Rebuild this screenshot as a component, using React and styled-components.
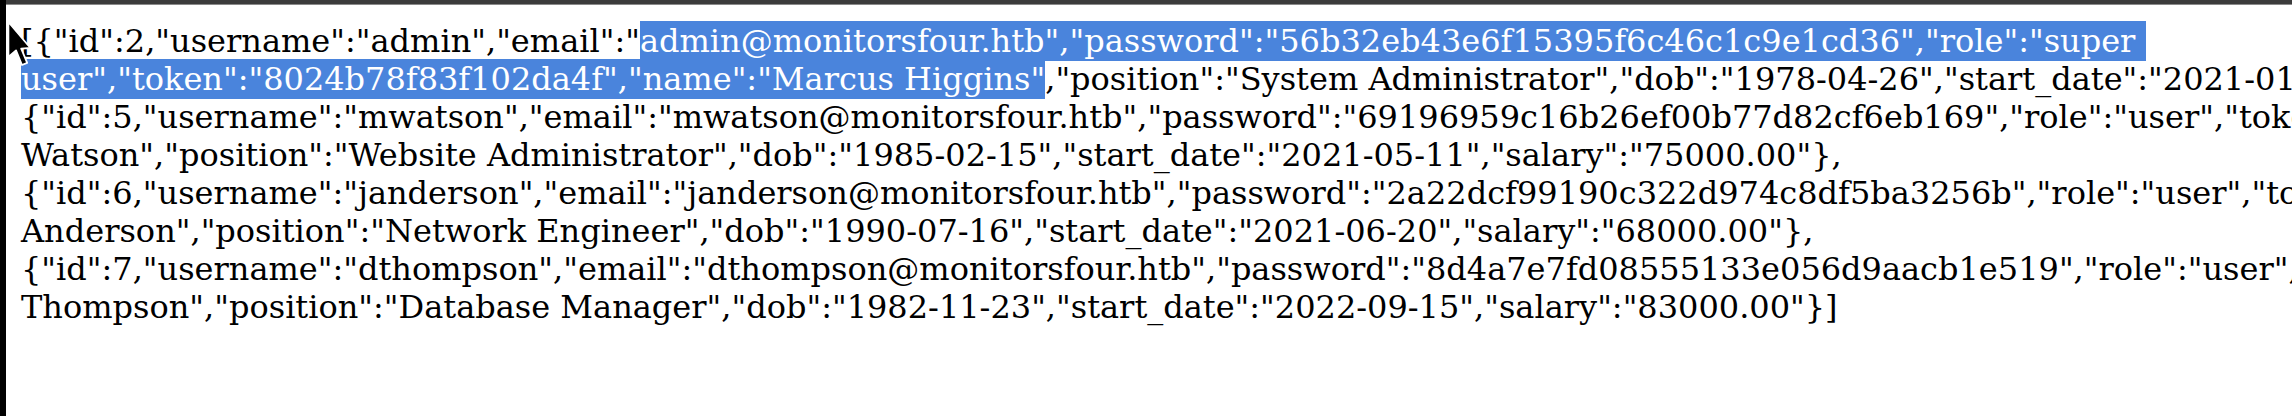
import React from "react";
import styled, { createGlobalStyle } from "styled-components";

const GlobalStyle = createGlobalStyle`
  html,
  body {
    margin: 0;
    padding: 0;
    background: #ffffff;
  }
  #root {
    width: 2292px;
    height: 416px;
  }
`;

const Frame = styled.div`
  display: flex;
  width: 2292px;
  height: 416px;
  overflow: hidden;
  background: #000000;
`;

const Edge = styled.div`
  flex: 0 0 6px;
  background: #000000;
`;

const Window = styled.div`
  flex: 1;
  display: flex;
  flex-direction: column;
  min-width: 0;
  background: #ffffff;
`;

const TopBar = styled.div`
  flex: 0 0 4px;
  background: #3b3b3b;
  border-bottom: 1px solid #8a8a8a;
`;

const Viewport = styled.div`
  position: relative;
  flex: 1;
  overflow: hidden;
  padding: 17px 0 0 15px;
`;

const Raw = styled.div`
  font-family: "DejaVu Serif", serif;
  font-size: 32px;
  line-height: 38px;
  color: #000000;
`;

const Line = styled.div`
  white-space: pre;
`;

const Selected = styled.span`
  background: #4a84dc;
  color: #ffffff;
  padding: 1px 0;
`;

const Pointer = styled.svg`
  position: absolute;
  z-index: 2;
  left: 0;
  top: 15px;
  width: 26px;
  height: 48px;
  overflow: visible;
`;

const lines = [
  [
    { text: '[{"id":2,"username":"admin","email":"' },
    {
      text: 'admin@monitorsfour.htb","password":"56b32eb43e6f15395f6c46c1c9e1cd36","role":"super ',
      selected: true
    }
  ],
  [
    { text: 'user","token":"8024b78f83f102da4f","name":"Marcus Higgins"', selected: true },
    {
      text: ',"position":"System Administrator","dob":"1978-04-26","start_date":"2021-01-04","salary":"'
    }
  ],
  [
    {
      text: '{"id":5,"username":"mwatson","email":"mwatson@monitorsfour.htb","password":"69196959c16b26ef00b77d82cf6eb169","role":"user","token":"'
    }
  ],
  [
    {
      text: 'Watson","position":"Website Administrator","dob":"1985-02-15","start_date":"2021-05-11","salary":"75000.00"},'
    }
  ],
  [
    {
      text: '{"id":6,"username":"janderson","email":"janderson@monitorsfour.htb","password":"2a22dcf99190c322d974c8df5ba3256b","role":"user","token":"'
    }
  ],
  [
    {
      text: 'Anderson","position":"Network Engineer","dob":"1990-07-16","start_date":"2021-06-20","salary":"68000.00"},'
    }
  ],
  [
    {
      text: '{"id":7,"username":"dthompson","email":"dthompson@monitorsfour.htb","password":"8d4a7e7fd08555133e056d9aacb1e519","role":"user","token":"'
    }
  ],
  [
    {
      text: 'Thompson","position":"Database Manager","dob":"1982-11-23","start_date":"2022-09-15","salary":"83000.00"}]'
    }
  ]
];

function App() {
  return (
    <>
      <GlobalStyle />
      <Frame>
        <Edge />
        <Window>
          <TopBar />
          <Viewport>
            <Raw>
              {lines.map((parts, i) => (
                <Line key={i}>
                  {parts.map((p, j) =>
                    p.selected ? (
                      <Selected key={j}>{p.text}</Selected>
                    ) : (
                      <span key={j}>{p.text}</span>
                    )
                  )}
                </Line>
              ))}
            </Raw>
            <Pointer width="26" height="48" viewBox="0 0 13 24">
              <path
                d="M1.2 1 L1.2 18.5 L5 15.2 L8 22.5 L10.6 21.4 L7.6 14.3 L12.2 14 Z"
                fill="#000000"
                stroke="#ffffff"
                strokeWidth="0.9"
                strokeLinejoin="round"
              />
            </Pointer>
          </Viewport>
        </Window>
      </Frame>
    </>
  );
}

export default App;
